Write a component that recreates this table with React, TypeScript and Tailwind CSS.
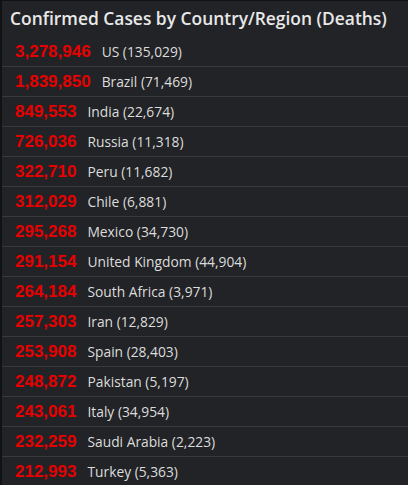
import React from 'react';

const rows: [string, string, string][] = [
  ['3,278,946', 'US', '135,029'],
  ['1,839,850', 'Brazil', '71,469'],
  ['849,553', 'India', '22,674'],
  ['726,036', 'Russia', '11,318'],
  ['322,710', 'Peru', '11,682'],
  ['312,029', 'Chile', '6,881'],
  ['295,268', 'Mexico', '34,730'],
  ['291,154', 'United Kingdom', '44,904'],
  ['264,184', 'South Africa', '3,971'],
  ['257,303', 'Iran', '12,829'],
  ['253,908', 'Spain', '28,403'],
  ['248,872', 'Pakistan', '5,197'],
  ['243,061', 'Italy', '34,954'],
  ['232,259', 'Saudi Arabia', '2,223'],
  ['212,993', 'Turkey', '5,363'],
];

export default function App() {
  return (
    <div className="w-[408px] h-[485px] overflow-hidden bg-[#222326] border-t border-l-2 border-[#111214]">
      <div className="h-[36px] pl-[8px] pb-[1px] flex items-center font-['Open_Sans',sans-serif] font-semibold text-[17.4px] text-[#e8e8e8]">
        Confirmed Cases by Country/Region (Deaths)
      </div>
      <div>
        {rows.map(([cases, name, deaths]) => (
          <div key={name} className="h-[30px] border-b border-[#38393c] pl-[13px] pt-[1px] flex items-center gap-[11px]">
            <span className="font-['Liberation_Sans',Arial,sans-serif] font-bold text-[17px] text-[#e60000]">{cases}</span>
            <span className="font-['Open_Sans',sans-serif] text-[13.8px] text-[#dcdcdc]">
              {name} ({deaths})
            </span>
          </div>
        ))}
      </div>
    </div>
  );
}
